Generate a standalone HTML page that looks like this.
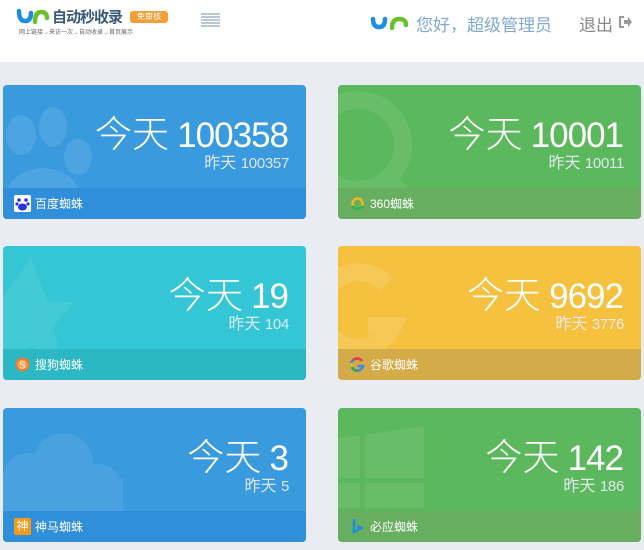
<!DOCTYPE html>
<html><head><meta charset="utf-8">
<style>
*{margin:0;padding:0;box-sizing:border-box}
body{width:644px;height:550px;overflow:hidden;background:#e9ecf3;font-family:"Liberation Sans","Noto Sans CJK SC",sans-serif;position:relative}
.hdr{position:absolute;left:0;top:0;width:644px;height:62px;background:#fff}
.card{position:absolute;width:303px;height:134px;border-radius:4px;overflow:hidden}
.card .ft{position:absolute;left:0;right:0;bottom:0;height:31px;display:flex;align-items:center;padding-left:11px;color:#fff;font-size:12px}
.card .ft .ic{width:17px;height:17px;margin-right:4px;border-radius:2px;display:inline-block}
.big{position:absolute;right:17px;top:26px;color:#fff;font-size:37px;line-height:40px;white-space:nowrap;font-family:"Noto Sans CJK SC","Liberation Sans",sans-serif;font-weight:300}
.big b{font-weight:normal;font-family:"Liberation Sans",sans-serif;letter-spacing:-1px;font-size:35px;margin-right:1px}
.sm{position:absolute;right:17px;top:69px;color:#eef;font-size:16px;line-height:20px;white-space:nowrap;opacity:.9}
.sm b{font-weight:normal;letter-spacing:-0.3px;font-size:15px}
.wm{position:absolute;left:0;top:0}
</style></head><body>
<div class="hdr">
 <svg style="position:absolute;left:16px;top:8px" width="34" height="16" viewBox="0 0 34 16"><path d="M3 3 Q3 13 9 13 Q15 13 15 5" stroke="#1e8fe0" stroke-width="4.5" fill="none" stroke-linecap="round"/><path d="M19 14 Q19 4 25 4 Q31 4 31 10" stroke="#6cc02a" stroke-width="4.5" fill="none" stroke-linecap="round"/></svg>
 <div style="position:absolute;left:52px;top:6px;font-size:15px;font-weight:bold;color:#3a5a7c;letter-spacing:-1px">自动秒收录</div>
 <div style="position:absolute;left:130px;top:11px;width:38px;height:12px;background:#f2a03a;border-radius:3px;color:#fff;font-size:8px;line-height:12px;text-align:center">免审核</div>
 <div style="position:absolute;left:19px;top:27px;font-size:6px;color:#666;white-space:nowrap">网上链接→来访一次→自动收录→首页展示</div>
 <svg style="position:absolute;left:201px;top:13px" width="19" height="15"><g fill="#b8c6d8"><rect y="0" width="19" height="2"/><rect y="3" width="19" height="2"/><rect y="6" width="19" height="2"/><rect y="9" width="19" height="2"/><rect y="12" width="19" height="2"/></g></svg>
 <svg style="position:absolute;left:370px;top:15px" width="42" height="15" viewBox="0 0 42 15"><path d="M3 4 Q3 12 9 12 Q15 12 15 4" stroke="#1e8fe0" stroke-width="4.5" fill="none" stroke-linecap="round"/><path d="M22 13 Q22 4 29 4 Q36 4 36 10" stroke="#6cc02a" stroke-width="4.5" fill="none" stroke-linecap="round"/></svg>
 <div style="position:absolute;left:416px;top:11px;font-size:17px;color:#7fa9d9">您好，超级管理员</div>
 <div style="position:absolute;left:579px;top:11px;font-size:17px;color:#888">退出</div>
 <svg style="position:absolute;left:618px;top:15px" width="15" height="14"><path d="M6 2H2V12H6" stroke="#999" stroke-width="2" fill="none"/><path d="M6 5H10V2L14 7L10 12V9H6Z" fill="#999"/></svg>
</div>

<div class="card" style="left:3px;top:85px;background:#3a9ade">
 <svg class="wm" width="303" height="134"><g fill="#fff" opacity=".1"><ellipse cx="18" cy="50" rx="15" ry="20"/><ellipse cx="50" cy="42" rx="14" ry="20"/><ellipse cx="75" cy="72" rx="14" ry="18"/><ellipse cx="40" cy="115" rx="38" ry="32"/></g></svg>
 <div class="big">今天 <b>100358</b></div><div class="sm">昨天 <b>100357</b></div>
 <div class="ft" style="background:#2f8fd8"><span class="ic" style="background:#fff;position:relative"><svg width="17" height="17"><g fill="#2932e1"><circle cx="5" cy="5" r="1.8"/><circle cx="12" cy="5" r="1.8"/><circle cx="3" cy="9" r="1.6"/><circle cx="14" cy="9" r="1.6"/><ellipse cx="8.5" cy="12" rx="4.5" ry="3.5"/></g></svg></span>百度蜘蛛</div>
</div>

<div class="card" style="left:338px;top:85px;background:#5cb85c">
 <svg class="wm" width="303" height="134"><g fill="none" stroke="#fff" stroke-width="18" opacity=".08"><circle cx="20" cy="60" r="45"/><path d="M45 90L80 125"/></g></svg>
 <div class="big">今天 <b>10001</b></div><div class="sm">昨天 <b>10011</b></div>
 <div class="ft" style="background:#67ae60"><span class="ic"><svg width="17" height="17"><circle cx="8.5" cy="8.5" r="5" stroke="#f6b623" stroke-width="2.5" fill="none"/><path d="M3 11Q8.5 16 14 11" stroke="#2db34a" stroke-width="2.5" fill="none"/></svg></span>360蜘蛛</div>
</div>

<div class="card" style="left:3px;top:246px;background:#34c6d4">
 <svg class="wm" width="303" height="134"><path d="M28 12L45 55L72 57L50 80L60 120L28 100L0 118V50Z" fill="#fff" opacity=".08"/></svg>
 <div class="big">今天 <b>19</b></div><div class="sm">昨天 <b>104</b></div>
 <div class="ft" style="background:#2cb7c5"><span class="ic"><svg width="17" height="17"><circle cx="8.5" cy="8.5" r="7" fill="#f07c2b"/><circle cx="8.5" cy="8.5" r="5" fill="#f9a04e"/><text x="5" y="12.5" font-size="10" fill="#fff" font-family="Liberation Sans">S</text></svg></span>搜狗蜘蛛</div>
</div>

<div class="card" style="left:338px;top:246px;background:#f5c13e">
 <svg class="wm" width="303" height="134"><path d="M48 38A38 38 0 1 0 55 80H30" stroke="#fff" stroke-width="18" fill="none" opacity=".12"/></svg>
 <div class="big">今天 <b>9692</b></div><div class="sm">昨天 <b>3776</b></div>
 <div class="ft" style="background:#d3ab48"><span class="ic"><svg width="17" height="17"><path d="M13 5A6 6 0 1 0 14 10H8.5" stroke="#4285f4" stroke-width="2.6" fill="none"/><path d="M4 4A6 6 0 0 1 13 5" stroke="#ea4335" stroke-width="2.6" fill="none"/><path d="M3 11A6 6 0 0 0 9 14.5" stroke="#34a853" stroke-width="2.6" fill="none"/><path d="M2.6 7A6 6 0 0 0 3 11" stroke="#fbbc05" stroke-width="2.6" fill="none"/></svg></span>谷歌蜘蛛</div>
</div>

<div class="card" style="left:3px;top:408px;background:#3a9ade">
 <svg class="wm" width="303" height="134"><g fill="#fff" opacity=".08"><circle cx="60" cy="55" r="30"/><circle cx="25" cy="70" r="25"/><circle cx="95" cy="80" r="24"/><rect x="0" y="70" width="120" height="40"/></g></svg>
 <div class="big">今天 <b>3</b></div><div class="sm">昨天 <b>5</b></div>
 <div class="ft" style="background:#2f8fd8"><span class="ic" style="background:#f49a1b;color:#fff;font-size:12px;line-height:17px;text-align:center">神</span>神马蜘蛛</div>
</div>

<div class="card" style="left:338px;top:408px;background:#5cb85c">
 <svg class="wm" width="303" height="134"><g fill="#fff" opacity=".08"><path d="M0 30L22 28V70H0Z"/><path d="M27 27L86 18V70H27Z"/><path d="M0 75H22V100H0Z"/><path d="M27 75H86V100H27Z"/></g></svg>
 <div class="big">今天 <b>142</b></div><div class="sm">昨天 <b>186</b></div>
 <div class="ft" style="background:#68ae60"><span class="ic"><svg width="17" height="17"><path d="M5 1V14L12 10L8 8" stroke="#1d8de0" stroke-width="2.5" fill="none"/></svg></span>必应蜘蛛</div>
</div>
</body></html>
